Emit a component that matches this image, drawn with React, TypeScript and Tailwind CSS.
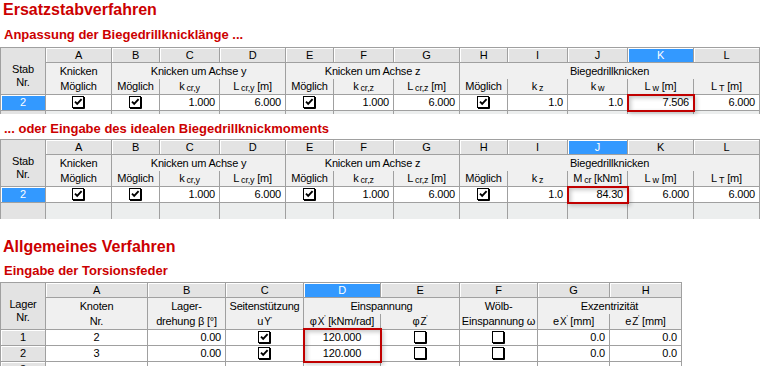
import React from 'react';

type P = { children?: React.ReactNode; className?: string };

function Check({ checked = true }: { checked?: boolean }) {
  return (
    <svg width="13" height="13" viewBox="0 0 13 13" className="block">
      <rect x="0.5" y="0.5" width="11" height="11" fill="#ffffff" stroke="#000000" />
      <path d="M12.5 1 V12.5 H1" fill="none" stroke="#000000" />
      {checked && <path d="M3 5.6 L5.2 7.9 L9.6 3.2" fill="none" stroke="#000000" strokeWidth="1.9" />}
    </svg>
  );
}

function Sb({ children }: P) {
  return <span className="relative top-[2px] ml-[2px] text-[9px]">{children}</span>;
}

function Pr({ children }: P) {
  return (
    <>
      <span className="ml-px text-[10px]">{children}</span>
      <span className="relative -top-[3px] text-[7px]">'</span>
    </>
  );
}

function Letter({ c, sel = false }: { c: string; sel?: boolean }) {
  return (
    <div
      className={
        sel
          ? 'flex items-center justify-center border-r border-b border-[#a0a0a0] bg-[#3399ff] leading-[14px] text-white shadow-[inset_1px_1px_0_#ffffff]'
          : 'flex items-center justify-center border-r border-b border-[#a0a0a0] bg-[#e3e3e3] leading-[14px] text-black shadow-[inset_1px_1px_0_#ffffff]'
      }
    >
      {c}
    </div>
  );
}

function Corner({ a, b }: { a: string; b: string }) {
  return (
    <div className="row-span-3 flex flex-col items-center border-r border-b border-[#a0a0a0] bg-[#e3e3e3] pt-[15px] leading-[13px]">
      <div>{a}</div>
      <div>{b}</div>
    </div>
  );
}

function Two({ a, b }: { a: React.ReactNode; b: React.ReactNode }) {
  return (
    <div className="row-span-2 flex flex-col border-r border-b border-[#a0a0a0] bg-[#f0f0f0]">
      <div className="flex h-[16px] items-center justify-center whitespace-nowrap">{a}</div>
      <div className="flex h-[15px] items-center justify-center whitespace-nowrap">{b}</div>
    </div>
  );
}

function Group({ children, className = '' }: P) {
  return (
    <div className={`flex items-center justify-center whitespace-nowrap border-r border-[#a0a0a0] bg-[#f0f0f0] ${className}`}>
      {children}
    </div>
  );
}

function Sub({ children }: P) {
  return (
    <div className="flex items-center justify-center whitespace-nowrap border-r border-b border-[#a0a0a0] bg-[#f0f0f0]">
      {children}
    </div>
  );
}

function RowSel({ children }: P) {
  return (
    <div className="flex items-center justify-center border-r border-b border-[#a0a0a0] bg-[#3399ff] text-white shadow-[inset_1px_1px_0_#ffffff]">
      {children}
    </div>
  );
}

function RowHead({ children }: P) {
  return (
    <div className="flex items-center justify-center border-r border-b border-[#a0a0a0] bg-[#e3e3e3] shadow-[inset_1px_1px_0_#ffffff]">
      {children}
    </div>
  );
}

function Num({ children }: P) {
  return (
    <div className="flex items-center justify-end border-r border-b border-[#a0a0a0] bg-white pr-1">{children}</div>
  );
}

function Mid({ children }: P) {
  return (
    <div className="flex items-center justify-center border-r border-b border-[#a0a0a0] bg-white">{children}</div>
  );
}

function BoxNum({ children }: P) {
  return (
    <div className="relative flex items-center justify-end border-r border-b border-[#a0a0a0] bg-white pr-1">
      {children}
      <div className="pointer-events-none absolute -top-px -left-px -right-[2px] -bottom-[2px] z-10 border-2 border-[#c00000] shadow-[inset_2px_2px_4px_rgba(0,0,0,0.22),2px_2px_4px_rgba(0,0,0,0.18)]" />
    </div>
  );
}

function EmptyHead() {
  return <div className="border-r border-[#a0a0a0] bg-[#e3e3e3]" />;
}

function Empty() {
  return <div className="border-r border-[#a0a0a0] bg-[#eceeee]" />;
}

const letters = ['A', 'B', 'C', 'D', 'E', 'F', 'G', 'H', 'I', 'J', 'K', 'L'];

function StabTable({ variant }: { variant: 1 | 2 }) {
  const selLetter = variant === 1 ? 'K' : 'J';
  return (
    <div
      className={
        variant === 1
          ? 'grid w-[760px] grid-cols-[45px_66px_48px_60px_66px_48px_60px_66px_48px_60px_60px_66px_66px] grid-rows-[15px_16px_16px_16px_3px] border-l border-t border-[#a0a0a0]'
          : 'grid w-[760px] grid-cols-[45px_66px_48px_60px_66px_48px_60px_66px_48px_60px_60px_66px_66px] grid-rows-[15px_16px_16px_16px_16px] border-l border-t border-[#a0a0a0]'
      }
    >
      <Corner a="Stab" b="Nr." />
      {letters.map((l) => (
        <Letter key={l} c={l} sel={l === selLetter} />
      ))}
      <Two a="Knicken" b="Möglich" />
      <Group className="col-span-3">Knicken um Achse y</Group>
      <Group className="col-span-3">Knicken um Achse z</Group>
      <Group className="col-span-5">Biegedrillknicken</Group>
      <Sub>Möglich</Sub>
      <Sub>
        k<Sb>cr,y</Sb>
      </Sub>
      <Sub>
        L<Sb>cr,y</Sb>&nbsp;[m]
      </Sub>
      <Sub>Möglich</Sub>
      <Sub>
        k<Sb>cr,z</Sb>
      </Sub>
      <Sub>
        L<Sb>cr,z</Sb>&nbsp;[m]
      </Sub>
      <Sub>Möglich</Sub>
      <Sub>
        k<Sb>z</Sb>
      </Sub>
      {variant === 1 ? (
        <Sub>
          k<Sb>w</Sb>
        </Sub>
      ) : (
        <Sub>
          M<Sb>cr</Sb>&nbsp;[kNm]
        </Sub>
      )}
      <Sub>
        L<Sb>w</Sb>&nbsp;[m]
      </Sub>
      <Sub>
        L<Sb>T</Sb>&nbsp;[m]
      </Sub>

      <RowSel>2</RowSel>
      <Mid>
        <Check />
      </Mid>
      <Mid>
        <Check />
      </Mid>
      <Num>1.000</Num>
      <Num>6.000</Num>
      <Mid>
        <Check />
      </Mid>
      <Num>1.000</Num>
      <Num>6.000</Num>
      <Mid>
        <Check />
      </Mid>
      <Num>1.0</Num>
      {variant === 1 ? <Num>1.0</Num> : <BoxNum>84.30</BoxNum>}
      {variant === 1 ? <BoxNum>7.506</BoxNum> : <Num>6.000</Num>}
      <Num>6.000</Num>

      <EmptyHead />
      {letters.map((l) => (
        <Empty key={l} />
      ))}
    </div>
  );
}

const letters3 = ['A', 'B', 'C', 'D', 'E', 'F', 'G', 'H'];

function TorsionTable() {
  return (
    <div className="grid w-[682px] grid-cols-[45px_102px_78px_78px_77px_79px_78px_72px_72px] grid-rows-[15px_16px_16px_16px_16px_16px] border-l border-t border-[#a0a0a0]">
      <Corner a="Lager" b="Nr." />
      {letters3.map((l) => (
        <Letter key={l} c={l} sel={l === 'D'} />
      ))}
      <Two a="Knoten" b="Nr." />
      <Two a="Lager-" b="drehung β [°]" />
      <Two
        a="Seitenstützung"
        b={
          <span>
            u<Pr>Y</Pr>
          </span>
        }
      />
      <Group className="col-span-2">Einspannung</Group>
      <Two a="Wölb-" b="Einspannung ω" />
      <Group className="col-span-2">Exzentrizität</Group>
      <Sub>
        φ<Pr>X</Pr>&nbsp;[kNm/rad]
      </Sub>
      <Sub>
        φ<Pr>Z</Pr>
      </Sub>
      <Sub>
        e<Pr>X</Pr>&nbsp;[mm]
      </Sub>
      <Sub>
        e<Pr>Z</Pr>&nbsp;[mm]
      </Sub>

      <RowHead>1</RowHead>
      <Mid>2</Mid>
      <Num>0.00</Num>
      <Mid>
        <Check />
      </Mid>
      <div className="relative flex items-center justify-center border-r border-b border-[#a0a0a0] bg-white">
        120.000
        <div className="pointer-events-none absolute -top-[2px] -left-px z-10 h-[35px] w-[79px] border-2 border-[#c00000] shadow-[inset_2px_2px_4px_rgba(0,0,0,0.22),2px_2px_4px_rgba(0,0,0,0.18)]" />
      </div>
      <Mid>
        <Check checked={false} />
      </Mid>
      <Mid>
        <Check checked={false} />
      </Mid>
      <Num>0.0</Num>
      <Num>0.0</Num>

      <RowHead>2</RowHead>
      <Mid>3</Mid>
      <Num>0.00</Num>
      <Mid>
        <Check />
      </Mid>
      <Mid>120.000</Mid>
      <Mid>
        <Check checked={false} />
      </Mid>
      <Mid>
        <Check checked={false} />
      </Mid>
      <Num>0.0</Num>
      <Num>0.0</Num>

      <RowHead>3</RowHead>
      <Mid />
      <Mid />
      <Mid />
      <Mid />
      <Mid />
      <Mid />
      <Mid />
      <Mid />
    </div>
  );
}

export default function App() {
  return (
    <div className="h-[366px] w-[760px] overflow-hidden bg-white font-['Liberation_Sans',Arial,sans-serif] text-black">
      <div className="pl-[3px] text-[16px] font-bold leading-[20px] text-[#cc0000]">Ersatzstabverfahren</div>
      <div className="mt-[7px] pl-[4px] text-[13px] font-bold leading-[16px] text-[#cc0000]">
        Anpassung der Biegedrillknicklänge ...
      </div>
      <div className="mt-[4px] text-[11px] tracking-[-0.2px]">
        <StabTable variant={1} />
      </div>
      <div className="mt-[7px] pl-[4px] text-[13px] font-bold leading-[16px] text-[#cc0000]">
        ... oder Eingabe des idealen Biegedrillknickmoments
      </div>
      <div className="mt-[2px] text-[11px] tracking-[-0.2px]">
        <StabTable variant={2} />
      </div>
      <div className="mt-[18px] pl-[3px] text-[16px] font-bold leading-[20px] text-[#cc0000]">Allgemeines Verfahren</div>
      <div className="mt-[6px] pl-[4px] text-[13px] font-bold leading-[16px] text-[#cc0000]">Eingabe der Torsionsfeder</div>
      <div className="mt-[3px] text-[11px] tracking-[-0.2px]">
        <TorsionTable />
      </div>
    </div>
  );
}
